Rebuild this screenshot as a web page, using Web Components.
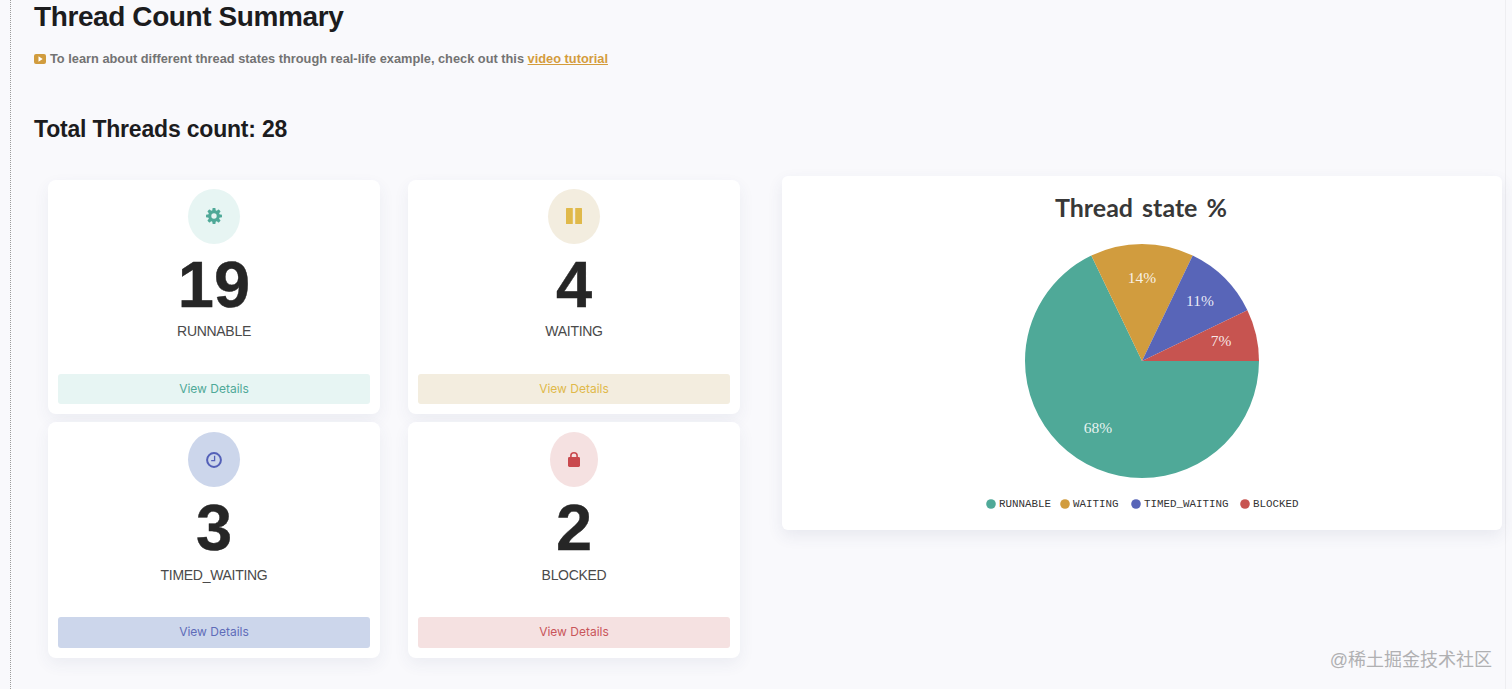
<!DOCTYPE html>
<html lang="en">
<head>
<meta charset="utf-8">
<title>Thread Count Summary</title>
<style>
  html, body { margin: 0; height: 100%; background: #f9f9fc; overflow: hidden; }
  body { font-family: "Liberation Sans", Arial, sans-serif; }
</style>
</head>
<body>
<thread-summary>
  <span slot="title">Thread Count Summary</span>
  <span slot="total">Total Threads count: 28</span>

  <stat-card tone="green" state="RUNNABLE" count="19">
    <svg viewBox="0 0 16 16" width="16" height="16" fill="currentColor">
      <circle cx="8" cy="8" r="4.300" fill="none" stroke="currentColor" stroke-width="3.200"/>
      <g id="teeth">
        <rect x="6.400" y="0" width="3.200" height="3.500" rx=".8"/>
        <rect x="6.400" y="0" width="3.200" height="3.500" rx=".8" transform="rotate(45 8 8)"/>
        <rect x="6.400" y="0" width="3.200" height="3.500" rx=".8" transform="rotate(90 8 8)"/>
        <rect x="6.400" y="0" width="3.200" height="3.500" rx=".8" transform="rotate(135 8 8)"/>
        <rect x="6.400" y="0" width="3.200" height="3.500" rx=".8" transform="rotate(180 8 8)"/>
        <rect x="6.400" y="0" width="3.200" height="3.500" rx=".8" transform="rotate(225 8 8)"/>
        <rect x="6.400" y="0" width="3.200" height="3.500" rx=".8" transform="rotate(270 8 8)"/>
        <rect x="6.400" y="0" width="3.200" height="3.500" rx=".8" transform="rotate(315 8 8)"/>
      </g>
    </svg>
  </stat-card>
  <stat-card tone="yellow" state="WAITING" count="4">
    <svg viewBox="0 0 16 16" width="16" height="16" fill="currentColor"><rect x="0" y="0" width="6.800" height="16" rx=".5"/><rect x="9.200" y="0" width="6.800" height="16" rx=".5"/></svg>
  </stat-card>
  <stat-card tone="blue" state="TIMED_WAITING" count="3" lower>
    <svg viewBox="0 0 16 16" width="16" height="16" fill="none" stroke="currentColor"><circle cx="8" cy="8" r="6.900" stroke-width="2"/><path d="M8.600 3.800V8.600H5.200" stroke-width="1.300"/></svg>
  </stat-card>
  <stat-card tone="red" state="BLOCKED" count="2" narrow lower>
    <svg viewBox="0 0 12 15" width="12" height="15" fill="currentColor"><rect x="0" y="4.900" width="12" height="10.100" rx="1.400"/><path d="M2.900 6.500V3.600A3.100 2.800 0 0 1 9.100 3.600V6.500" fill="none" stroke="currentColor" stroke-width="1.600"/></svg>
  </stat-card>

  <pie-card slot="chart"></pie-card>
</thread-summary>
<water-mark>@稀土掘金技术社区</water-mark>

<script>
  class ThreadSummary extends HTMLElement {
    connectedCallback() {
      this.attachShadow({ mode: "open" }).innerHTML = `
        <style>
          :host { display: block; box-sizing: border-box; height: 689px; margin-left: 10px; width: 1496px;
            border-left: 1px dotted #9c9c9c; border-right: 1px solid #eeeef1; padding-left: 23px; color: #1c1c1e; }
          h1 { margin: 0; padding-top: 1px; font-size: 28px; line-height: 32px; font-weight: 700; letter-spacing: -.4px; }
          p { margin: 17.500px 0 0; font-size: 12.8px; line-height: 16px; font-weight: 700; color: #737373;
              display: flex; align-items: center; gap: 4px; }
          a { color: #d49c3c; }
          h2 { margin: 47.500px 0 0; font-size: 23px; line-height: 30px; font-weight: 700; letter-spacing: -.2px; }
          .row { display: flex; align-items: flex-start; margin-top: 32px; }
          .cards { display: grid; grid-template-columns: 332px 332px; grid-template-rows: 234px 235.500px; column-gap: 28px; row-gap: 8px;
                   padding: 4px 0 0 14px; }
          ::slotted([slot=chart]) { margin-left: 42px; }
        </style>
        <h1><slot name="title"></slot></h1>
        <p>
          <svg viewBox="0 0 12 10" width="12" height="10"><rect width="12" height="10" rx="2" fill="#d19c3e"/><path d="M4.500 2.300L8.700 5 4.500 7.700Z" fill="#fff"/></svg>
          <span>To learn about different thread states through real-life example, check out this <a href="#">video tutorial</a></span>
        </p>
        <h2><slot name="total"></slot></h2>
        <div class="row">
          <div class="cards"><slot></slot></div>
          <slot name="chart"></slot>
        </div>`;
    }
  }

  const TONES = {
    green: { bg: "#e7f5f3", fg: "#4fa998", link: "#4fa998" },
    yellow: { bg: "#f3eddf", fg: "#e0b94a", link: "#e0b94a" },
    blue: { bg: "#ccd6eb", fg: "#5360b8", link: "#5f6cb9" },
    red: { bg: "#f5e1e1", fg: "#c9494e", link: "#c9555a" },
  };

  class StatCard extends HTMLElement {
    connectedCallback() {
      const tone = TONES[this.getAttribute("tone")];
      this.attachShadow({ mode: "open" }).innerHTML = `
        <style>
          :host { display: flex; flex-direction: column; align-items: center; box-sizing: border-box;
            background: #fff; border-radius: 8px; box-shadow: 0 6px 16px rgba(60, 70, 110, .07);
            padding: 8.500px 10px 10px; }
          :host([lower]) { padding-top: 10px; }
          .icon { width: ${this.hasAttribute("narrow") ? 48 : 52}px; height: 55px; border-radius: 50%; background: ${tone.bg}; color: ${tone.fg};
            display: flex; align-items: center; justify-content: center; }
          .count { font-size: 65px; line-height: 72px; font-weight: 700; color: #262626; margin-top: 5px; -webkit-text-stroke: .4px #262626; }
          .state { font-size: 14px; line-height: 18px; letter-spacing: -.3px; color: #4a4a4a; margin-top: 1px; }
          :host([lower]) .state { margin-top: 2px; }
          a { margin-top: auto; align-self: stretch; height: 30px; border-radius: 3px; background: ${tone.bg}; color: ${tone.link};
            font: 12px/29px Inter, "Liberation Sans", sans-serif; text-align: center; text-decoration: none; }
          :host([lower]) a { height: 31px; }
        </style>
        <div class="icon"><slot></slot></div>
        <div class="count">${this.getAttribute("count")}</div>
        <div class="state">${this.getAttribute("state")}</div>
        <a href="#">View Details</a>`;
    }
  }

  class PieCard extends HTMLElement {
    connectedCallback() {
      this.attachShadow({ mode: "open" }).innerHTML = `
        <style>
          :host { display: block; width: 720px; height: 354px; background: #fff; border-radius: 6px;
            box-shadow: 0 6px 16px rgba(60, 70, 110, .09); }
          svg { display: block; }
          .title { font: 700 25px Lato, "Open Sans", sans-serif; fill: #383838; word-spacing: 3px; }
          .pct { font: 15.500px "Liberation Serif", serif; fill: rgba(255, 255, 255, .88); }
          .leg { font: 10.830px "Liberation Mono", monospace; fill: #333; }
        </style>
        <svg viewBox="782 176 720 354" width="720" height="354">
          <text class="title" x="1141" y="217" text-anchor="middle">Thread state %</text>
          <path d="M1142 361L1259 361A117 117 0 0 1 1025 361A117 117 0 0 1 1091.300 255.600Z" fill="#4fa998"/>
          <path d="M1142 361L1091.300 255.600A117 117 0 0 1 1192.700 255.600Z" fill="#d19c3e"/>
          <path d="M1142 361L1192.700 255.600A117 117 0 0 1 1247.400 310.300Z" fill="#5865b8"/>
          <path d="M1142 361L1247.400 310.300A117 117 0 0 1 1259 361Z" fill="#c75450"/>
          <text class="pct" x="1142" y="283" text-anchor="middle">14%</text>
          <text class="pct" x="1200" y="306" text-anchor="middle">11%</text>
          <text class="pct" x="1221" y="346" text-anchor="middle">7%</text>
          <text class="pct" x="1098" y="433" text-anchor="middle">68%</text>
          <circle cx="991" cy="504" r="4.800" fill="#4fa998"/><text class="leg" x="999" y="507">RUNNABLE</text>
          <circle cx="1065" cy="504" r="4.800" fill="#d19c3e"/><text class="leg" x="1073" y="507">WAITING</text>
          <circle cx="1136" cy="504" r="4.800" fill="#5865b8"/><text class="leg" x="1144" y="507">TIMED_WAITING</text>
          <circle cx="1245" cy="504" r="4.800" fill="#c75450"/><text class="leg" x="1253" y="507">BLOCKED</text>
        </svg>`;
    }
  }

  class WaterMark extends HTMLElement {
    connectedCallback() {
      this.attachShadow({ mode: "open" }).innerHTML = `
        <style>
          :host { position: absolute; right: 20px; top: 648px; font: 18px/24px "Liberation Sans", "Noto Sans CJK SC", sans-serif; color: #b0b0b2; white-space: nowrap; }
        </style>
        <slot></slot>`;
    }
  }

  customElements.define("thread-summary", ThreadSummary);
  customElements.define("stat-card", StatCard);
  customElements.define("pie-card", PieCard);
  customElements.define("water-mark", WaterMark);
</script>
</body>
</html>
